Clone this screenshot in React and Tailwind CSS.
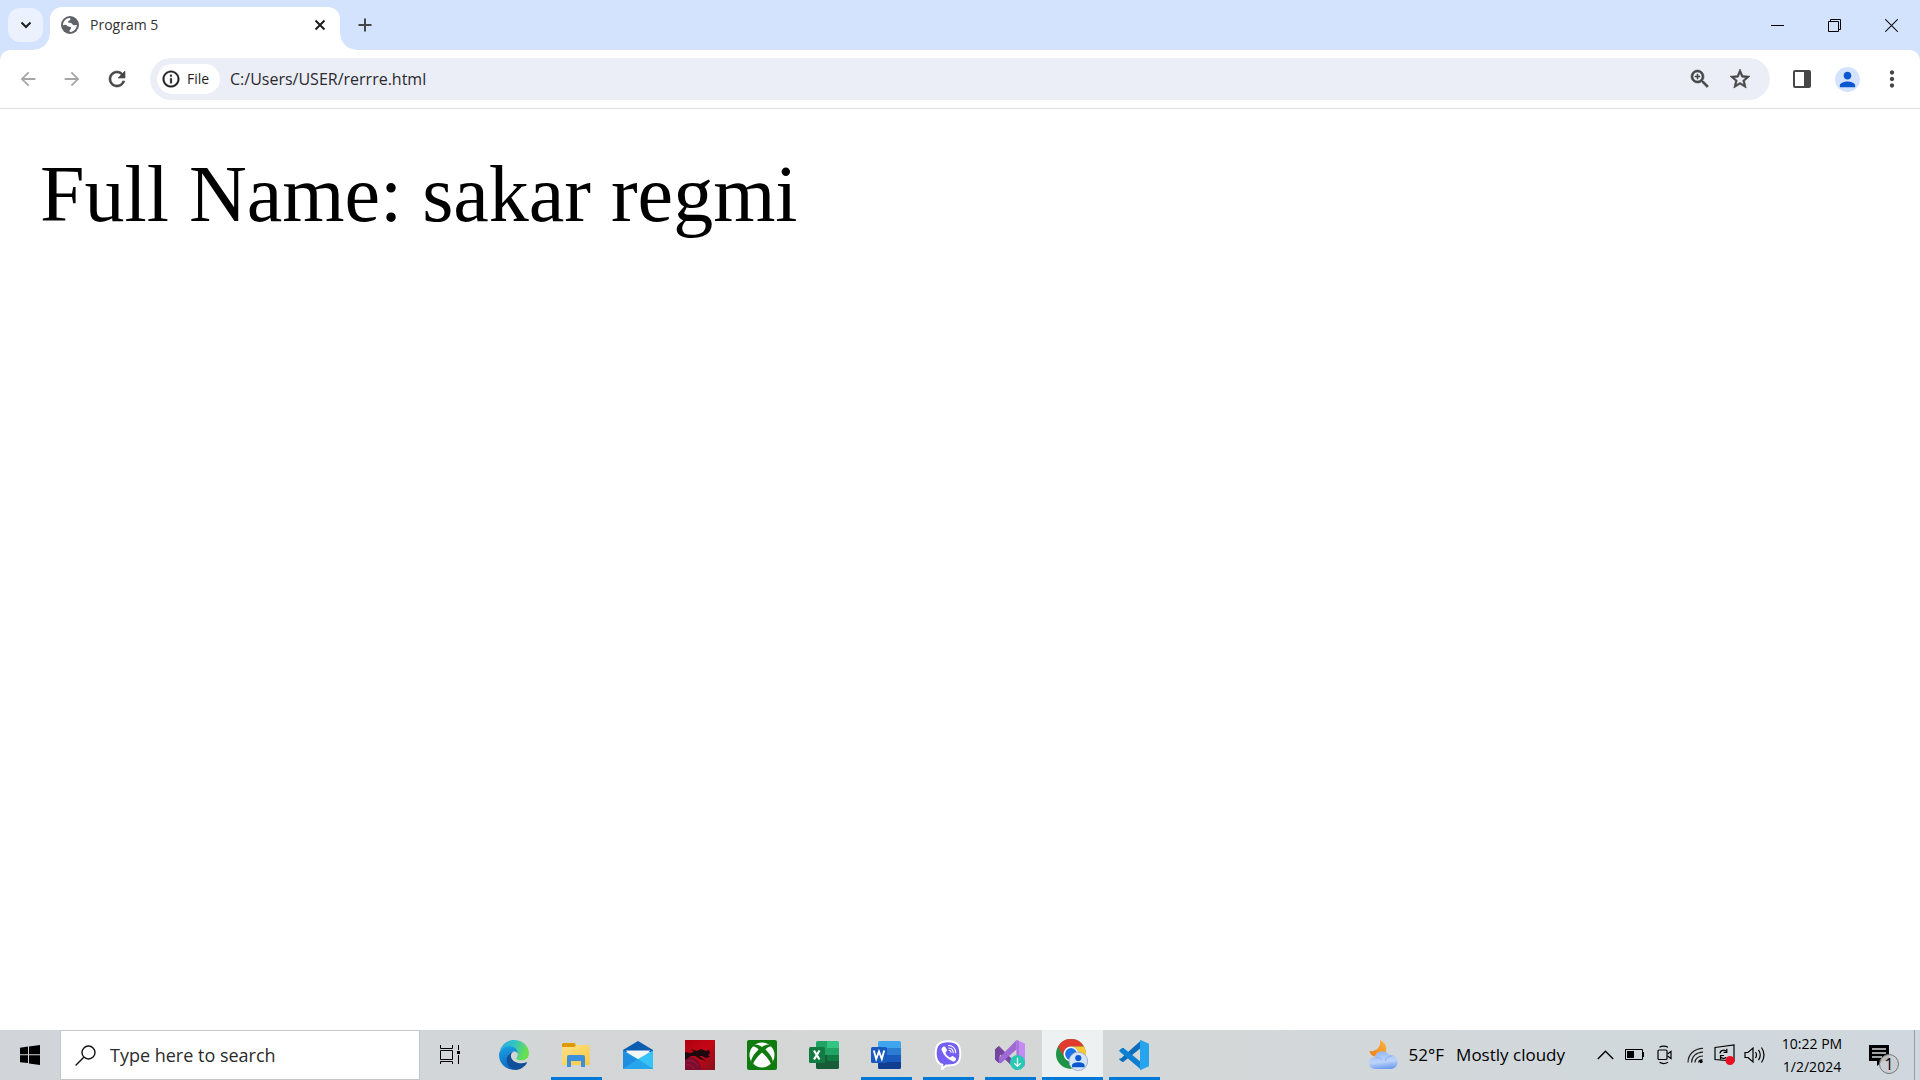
import React from "react";
import {
  MdArrowBack,
  MdArrowForward,
  MdInfoOutline,
  MdMoreVert,
  MdPerson,
  MdRefresh,
  MdStarBorder,
  MdZoomIn,
} from "react-icons/md";

/* ---------- Browser icons ---------- */

function GlobeIcon() {
  return (
    <svg width="18" height="18" viewBox="0 0 18 18" aria-hidden="true">
      <circle cx="9" cy="9" r="9" fill="#5f6368" />
      <path
        d="M2 9.2C2 5.6 4.6 2.6 8.3 2.1c1.2 0 1.5 1 .8 1.9-.8.9-2.3.8-2.1 2.1.2 1 1.700.6 2.900.9 1.500.4 1.500 2 2.800 2.200 1 .1 1.800-.5 3.200-.2-.2 3.600-3 6.500-6.500 6.900-1-.2-1.200-1-.6-1.900.5-.8 1.500-1.200 1.200-2.200-.3-1.200-2-.8-3.100-1.500C5.700 9.500 5.500 8.900 4.400 8.800 3.400 8.700 2.600 9.400 2 9.200z"
        fill="#fff"
      />
    </svg>
  );
}

function TabListIcon() {
  return (
    <svg width="12" height="8" viewBox="0 0 12 8" fill="none" stroke="#1f1f1f" strokeWidth="2" aria-hidden="true">
      <path d="M1.500 1.500 6 6l4.500-4.500" />
    </svg>
  );
}

function TabCloseIcon() {
  return (
    <svg width="12" height="12" viewBox="0 0 12 12" stroke="#1f1f1f" strokeWidth="2" aria-hidden="true">
      <path d="m1.500 1.500 9 9m0-9-9 9" />
    </svg>
  );
}

function PlusIcon() {
  return (
    <svg width="14" height="14" viewBox="0 0 14 14" stroke="#444746" strokeWidth="2" aria-hidden="true">
      <path d="M7 .5v13M.5 7h13" />
    </svg>
  );
}

function SidePanelIcon() {
  return (
    <svg width="18" height="18" viewBox="0 0 18 18" aria-hidden="true">
      <rect x="1" y="1" width="16" height="16" rx="1" fill="none" stroke="#474747" strokeWidth="2" />
      <path d="M11 1h6v16h-6z" fill="#474747" />
    </svg>
  );
}

function MinimizeIcon() {
  return (
    <svg width="13" height="13" viewBox="0 0 13 13" aria-hidden="true">
      <path d="M0 6h13v1H0z" />
    </svg>
  );
}

function RestoreIcon() {
  return (
    <svg width="13" height="13" viewBox="0 0 13 13" fill="none" stroke="#000" aria-hidden="true">
      <path d="M.5 2.500h10v10h-10zM2.500 2.500v-2h10v10h-2" />
    </svg>
  );
}

function WindowCloseIcon() {
  return (
    <svg width="13" height="13" viewBox="0 0 13 13" stroke="#111" strokeWidth="1.100" aria-hidden="true">
      <path d="m.3.3 12.400 12.400m0-12.400L.3 12.700" />
    </svg>
  );
}

/* ---------- Taskbar app icons ---------- */

function StartIcon() {
  return (
    <svg width="20" height="20" viewBox="0 0 20 20" aria-hidden="true">
      <path d="M0 2.800 8 1.600v7.700H0zM9 1.500 20 0v9.300H9zM0 10.300h8V18L0 17.200zM9 10.300h11V20L9 18.400z" />
    </svg>
  );
}

function SearchIcon() {
  return (
    <svg width="21" height="21" viewBox="0 0 21 21" fill="none" stroke="#111" strokeWidth="1.400" aria-hidden="true">
      <circle cx="13.500" cy="7.500" r="6.500" />
      <path d="M8.800 12.200.6 20.400" />
    </svg>
  );
}

function TaskViewIcon() {
  return (
    <svg width="21" height="20" viewBox="0 0 21 20" fill="none" stroke="#000" aria-hidden="true">
      <path d="M.5 5.500h12v9H.5zM.5 0v3.500h12V0M.5 19v-2.500h12V19M18.500 0v5M18.500 10v9" />
      <path d="M17 6h3v3h-3z" fill="#000" stroke="none" />
    </svg>
  );
}

function EdgeIcon() {
  return (
    <svg width="30" height="30" viewBox="0 0 24 24" aria-hidden="true">
      <defs>
        <linearGradient id="edgeA" x1="0" y1="0" x2="1" y2="0.300">
          <stop offset="0" stopColor="#2aa7e0" />
          <stop offset="0.500" stopColor="#33c3c4" />
          <stop offset="1" stopColor="#6be04f" />
        </linearGradient>
        <linearGradient id="edgeB" x1="0.300" y1="0" x2="0.500" y2="1">
          <stop offset="0" stopColor="#1aa0e2" />
          <stop offset="1" stopColor="#0a66c2" />
        </linearGradient>
      </defs>
      <path
        d="M.8 8.500C2.300 3.700 6.700 0 12 0c6.500 0 12 4.700 12 10.600 0 3.400-2.600 5.800-6 5.800-2.500 0-4.200-.8-4.200-1.800 0-.6 1.200-1.200 1.200-3.100C15 8.300 12 6 8.600 6 5 6 2 7.100.8 8.500z"
        fill="url(#edgeA)"
      />
      <path
        d="M0 12c0-4.200 4-7.100 8.600-7.100 4.300 0 6.400 3 6.400 5.800-.8-1.100-2-1.600-3.200-1.500C9.200 9.400 6.300 12 6.300 15.500c0 3.800 2.700 7.300 6.700 8.400A12 12 0 0 1 0 12z"
        fill="url(#edgeB)"
      />
      <path
        d="M11.800 9.200C9 10 6 12 6 15.800 6 20 9.500 24 13.500 23.900c3.700-.3 7-2.500 8.800-5.600.2-.4-.1-.7-.5-.5-1.300.6-2.500.8-3.800.8-4.700 0-8.500-2.700-8.500-6.100 0-1.400.9-2.600 2.300-3.300z"
        fill="#104f99"
      />
    </svg>
  );
}

function ExplorerIcon() {
  return (
    <svg width="28" height="26" viewBox="0 0 28 26" aria-hidden="true">
      <defs>
        <linearGradient id="folder" x1="0" y1="0" x2="1" y2="1">
          <stop offset="0" stopColor="#ffe08a" />
          <stop offset="1" stopColor="#fbc93f" />
        </linearGradient>
      </defs>
      <path d="M0 2.500A1.500 1.500 0 0 1 1.500 1h11l1.500 2H27v9H0z" fill="#fdd66b" />
      <path d="M0 2.500A1.500 1.500 0 0 1 1.500 1H12q1.500 0 1.500 2T12 5H0z" fill="#dd9a05" />
      <path d="M0 5h13l2-2h12a.6.6 0 0 1 .6.600V23H0z" fill="url(#folder)" />
      <path d="M5 25V15a2 2 0 0 1 2-2h14a2 2 0 0 1 2 2v10h-4v-6H9v6z" fill="#3b8fdc" />
    </svg>
  );
}

function MailIcon() {
  return (
    <svg width="30" height="28" viewBox="0 0 30 28" aria-hidden="true">
      <path d="M0 9 15 0l15 9v2H0z" fill="#0a5db0" />
      <path d="M2.500 9.500h25L15 20z" fill="#f4f6f8" />
      <path d="M0 9.500 15 18l15-8.500V28H0z" fill="#37c3f5" />
      <path d="M0 9.500 30 28H0z" fill="#1f8ee0" />
      <path d="M15 18 30 28H0L15 18z" fill="#28a6eb" />
    </svg>
  );
}

function DragonIcon() {
  return (
    <svg width="30" height="30" viewBox="0 0 30 30" aria-hidden="true">
      <defs>
        <linearGradient id="dragonBg" x1="0" y1="0" x2="1" y2="1">
          <stop offset="0" stopColor="#b00012" />
          <stop offset="0.500" stopColor="#c40616" />
          <stop offset="1" stopColor="#86101c" />
        </linearGradient>
      </defs>
      <path d="M0 0h30v30H0z" fill="url(#dragonBg)" />
      <path d="M0 19c5-3 11-2 14 3l3 8H0z" fill="#7c0d2d" />
      <path
        d="M0 12l5 1 4-1-3-3 6 2 4-2 5 2 3-1 1 3-2 2 2 2-4 1-4-2-3 0 7 5-6-2-5-3-4 0-6 4z"
        fill="#1d080d"
      />
      <path d="M2 21c5-1 9 1 11 5M1 25c4-1 6 1 8 4" fill="none" stroke="#b51b45" strokeWidth="0.800" />
    </svg>
  );
}

function XboxIcon() {
  return (
    <svg width="30" height="30" viewBox="0 0 30 30" aria-hidden="true">
      <rect width="30" height="30" rx="2" fill="#107c10" />
      <circle cx="15" cy="15" r="12.500" fill="#fff" />
      <path
        d="M6.300 4.800C9.500 3.800 12.500 5.200 15 7c2.500-1.800 5.500-3.200 8.700-2.200l1.300 2c-2.500-1-4.700.6-6.500 2.700 4.100 4 8.100 9.400 7.300 13.900l-1.500 1.500C22.800 20.300 19 16 15 12.500 11 16 7.200 20.300 5.700 24.900l-1.500-1.500c-.8-4.500 3.200-9.900 7.300-13.900C9.700 7.400 7.500 5.800 5 6.800z"
        fill="#107c10"
      />
    </svg>
  );
}

function ExcelIcon() {
  return (
    <svg width="30" height="28" viewBox="0 0 30 28" aria-hidden="true">
      <path d="M7 1.500A1.500 1.500 0 0 1 8.500 0H18v14H7z" fill="#21a366" />
      <path d="M18 0h10.500A1.500 1.500 0 0 1 30 1.500V7H18z" fill="#33c481" />
      <path d="M18 7h12v7H18z" fill="#21a366" />
      <path d="M7 14h11v7H7z" fill="#185c37" />
      <path d="M18 14h12v7H18z" fill="#107c41" />
      <path d="M7 20h23v6.500a1.500 1.500 0 0 1-1.500 1.500h-20A1.500 1.500 0 0 1 7 26.500z" fill="#185c37" />
      <rect y="6" width="16" height="16" rx="1.500" fill="#107c41" />
      <path d="m5 9.500 5.500 9m0-9-5.500 9" stroke="#fff" strokeWidth="2.200" />
    </svg>
  );
}

function WordIcon() {
  return (
    <svg width="30" height="28" viewBox="0 0 30 28" aria-hidden="true">
      <path d="M7 1.500A1.500 1.500 0 0 1 8.500 0h20A1.500 1.500 0 0 1 30 1.500V7H7z" fill="#41a5ee" />
      <path d="M7 7h23v7H7z" fill="#2b7cd3" />
      <path d="M7 14h23v7H7z" fill="#185abd" />
      <path d="M7 21h23v5.500a1.500 1.500 0 0 1-1.500 1.500h-20A1.500 1.500 0 0 1 7 26.500z" fill="#103f91" />
      <rect y="6" width="16" height="16" rx="1.500" fill="#185abd" />
      <path d="m2.800 9.500 2.400 8.500L8 10.500l2.800 7.500 2.400-8.500" fill="none" stroke="#fff" strokeWidth="1.900" />
    </svg>
  );
}

function ViberIcon() {
  return (
    <svg width="30" height="30" viewBox="0 0 30 30" aria-hidden="true">
      <path
        d="M15 1.200c8.500 0 12.300 3.300 12.300 12.500S23.500 25.600 15 25.600l-2-.1L9.300 29v-4.300C4.500 23.300 2.700 20 2.700 13.700 2.700 4.500 6.500 1.200 15 1.200z"
        fill="#7360f2"
        stroke="#fff"
        strokeWidth="2"
      />
      <path
        d="M10.300 6.700c.9-.6 1.600-.1 2.300.9l1.200 1.900c.4.800.2 1.500-.5 2-.8.600-.9 1-.5 2 .8 1.900 2 3 3.700 3.700.8.300 1.200.1 1.700-.5.600-.7 1.300-.8 2-.4l2 1.400c.9.700 1.100 1.400.6 2.200-.9 1.300-1.900 1.900-3.200 1.400-5.300-2.200-9.100-6-11-11.200-.4-1.300.3-2.500 1.700-3.400z"
        fill="#fff"
      />
      <path
        d="M15.500 5.500c4.300.2 7 2.900 7.200 7.300M15.800 8c2.800.2 4.300 1.800 4.500 4.600M16.200 10.300c1.200.1 1.800.8 1.900 2"
        fill="none"
        stroke="#fff"
        strokeWidth="1.100"
        strokeLinecap="round"
      />
    </svg>
  );
}

function VisualStudioIcon() {
  return (
    <svg width="30" height="30" viewBox="0 0 30 30" aria-hidden="true">
      <path d="M0 9.500 4 6v17l-4-3.500z" fill="#5b2f94" />
      <path d="M0 9.500 4 6l18 18v6h-1L5 14.500 4 23l-4-3.500z" fill="#75459f" />
      <path d="M21.500 0 4 18v5l2 .2L22 9z" fill="#9e6ad6" />
      <path d="M21.500 0 30 3.500V26l-8 4z" fill="#c48bf2" />
      <path d="M21.500 0 24 1v28l-2.500 1z" fill="#a974df" />
      <circle cx="22.500" cy="22.500" r="7.500" fill="#25c9b4" />
      <path d="M22.500 17.800v8.500m-3.300-3.200 3.300 3.300 3.300-3.300" fill="none" stroke="#fff" strokeWidth="1.300" />
    </svg>
  );
}

function ChromeIcon() {
  return (
    <svg width="32" height="32" viewBox="0 0 32 32" aria-hidden="true">
      <circle cx="15" cy="15" r="15" fill="#1e9447" />
      <path d="M2 7.500A15 15 0 0 1 28 7.500H15a7.500 7.500 0 0 0-6.500 11.200z" fill="#e33b2e" />
      <path d="M28 7.500A15 15 0 0 1 15 30l6.500-11.200A7.500 7.500 0 0 0 15 7.500z" fill="#fcc934" />
      <circle cx="15" cy="15" r="7.500" fill="#fff" />
      <circle cx="15" cy="15" r="5.900" fill="#1a73e8" />
      <circle cx="22.300" cy="22.300" r="9.300" fill="#d3e3fd" stroke="#9aa3b2" strokeWidth="0.800" />
      <circle cx="22.300" cy="19" r="3.100" fill="#0b57d0" />
      <path d="M16 28.200v-1.800c0-2.300 4.200-3.100 6.300-3.100s6.300.8 6.300 3.100v1.800z" fill="#0b57d0" />
    </svg>
  );
}

function VsCodeIcon() {
  return (
    <svg width="30" height="30" viewBox="0 0 30 30" aria-hidden="true">
      <path d="M1.800 18.500 22.500 0v7.500L4.500 21.800c-.5.300-1 .3-1.400 0L.6 19.900c-.5-.4-.5-1 0-1.400z" fill="#0a6ebd" />
      <path d="M.6 11.500c-.5-.4-.5-1 0-1.400l2.500-2c.4-.3.900-.3 1.400 0l18 14.400V30z" fill="#0b7fd0" />
      <path d="M22 .2 29 3.300c.6.300 1 .8 1 1.500v20.400c0 .7-.4 1.200-1 1.500l-7 3.100c-.7.300-1 .1-1-.5V.8c0-.6.300-.9 1-.6z" fill="#27a4ee" />
    </svg>
  );
}

/* ---------- System tray icons ---------- */

function WeatherIcon() {
  return (
    <svg width="30" height="30" viewBox="0 0 30 30" aria-hidden="true">
      <defs>
        <linearGradient id="moon" x1="0" y1="1" x2="1" y2="0">
          <stop offset="0" stopColor="#f07d1a" />
          <stop offset="1" stopColor="#fbb53a" />
        </linearGradient>
        <linearGradient id="cloud" x1="0.300" y1="0" x2="0.500" y2="1">
          <stop offset="0" stopColor="#94b8f5" />
          <stop offset="0.600" stopColor="#bdd3fa" />
          <stop offset="1" stopColor="#6f9cf0" />
        </linearGradient>
      </defs>
      <path d="M11 0c5 2.500 7.200 7 6 12l-10 5C4 16.500 1 14.500.3 11 6.500 12 12.500 7.500 11 0z" fill="url(#moon)" />
      <path d="M6 29a6 6 0 0 1-.3-12A8 8 0 0 1 20 14.800 7.200 7.200 0 1 1 22.800 29z" fill="url(#cloud)" />
      <path d="M6.500 17.500c3.500-.3 5.500 1 6.500 3M16 21c1-3.500 3.500-5 7-5" fill="none" stroke="#7ea7f2" strokeWidth="0.800" />
    </svg>
  );
}

function ChevronUpIcon() {
  return (
    <svg width="17" height="10" viewBox="0 0 17 10" fill="none" stroke="#000" strokeWidth="1.400" aria-hidden="true">
      <path d="m.8 9 7.700-7.700L16.200 9" />
    </svg>
  );
}

function BatteryIcon() {
  return (
    <svg width="20" height="12" viewBox="0 0 20 12" aria-hidden="true">
      <path d="M.5.500h17v10H.5z" fill="none" stroke="#000" />
      <path d="M2 2h7v7H2zM18 3h1v5h-1z" />
    </svg>
  );
}

function MeetNowIcon() {
  return (
    <svg width="16" height="20" viewBox="0 0 16 20" fill="none" stroke="#000" strokeWidth="1.200" aria-hidden="true">
      <rect x="1" y="5" width="9" height="9.500" rx="1" />
      <path d="m10.500 9 3.500-2.500v7L10.500 11M2.500 2.300q4-2.500 8.500 0M2.500 17.300q4 2.500 8.500 0" />
    </svg>
  );
}

function WifiIcon() {
  return (
    <svg width="17" height="17" viewBox="0 0 17 17" fill="none" stroke="#222" strokeWidth="1.200" aria-hidden="true">
      <path d="M1 15.500C1 7.500 7 1.500 16 1.300M4.500 15.500C4.800 9.500 9 5.500 16 5.200M8 15.500c.3-3.700 3-6.300 8-6.500" />
      <path d="M11.500 15.500c.2-1.700 1.600-2.900 4-3" />
      <circle cx="14" cy="14.500" r="1.700" fill="#000" stroke="none" />
    </svg>
  );
}

function SyncIcon() {
  return (
    <svg width="22" height="22" viewBox="0 0 22 22" fill="none" stroke="#000" strokeWidth="1.200" aria-hidden="true">
      <path d="M1 3.500 20 1v16l-19-1.500z" />
      <path d="M6 9.500c0-3 4.500-4.500 6.500-2M12.800 4.800v3.500H9.500M6.500 15.500V11.500H10M6.500 12.500c1 2.300 4 2.500 5.500 1" />
      <circle cx="16" cy="16.500" r="4.600" fill="#e81123" stroke="none" />
    </svg>
  );
}

function VolumeIcon() {
  return (
    <svg width="22" height="18" viewBox="0 0 22 18" fill="none" stroke="#000" strokeWidth="1.200" aria-hidden="true">
      <path d="M1 6.500h3l5-4.500v14l-5-4.500H1z" />
      <path d="M11.500 6q2 3 0 6M14.500 3.800q3.500 5.200 0 10.400M17.500 1.500q5 7.500 0 15" />
    </svg>
  );
}

function NotificationIcon() {
  return (
    <svg width="20" height="21" viewBox="0 0 20 21" aria-hidden="true">
      <path d="M0 0h20v16h-6l-6 5v-5H0z" />
      <path d="M3 4h14M3 8h14M3 12h10" stroke="#d2d8dc" strokeWidth="1.400" />
    </svg>
  );
}

/* ---------- Page sections ---------- */

function TabStrip() {
  return (
    <div className="flex h-[50px] items-stretch">
      <button
        aria-label="Search tabs"
        className="my-2 ml-2 flex w-[35px] shrink-0 items-center justify-center rounded-xl bg-[#ebf2fe]"
      >
        <TabListIcon />
      </button>
      <div className="relative mt-[7px] ml-[7px] flex w-[290px] items-center rounded-t-xl bg-white pb-[7px] pl-[11px] before:absolute before:bottom-0 before:-left-4 before:size-4 before:bg-[radial-gradient(circle_at_top_left,transparent_15px,white_16px)] after:absolute after:-right-4 after:bottom-0 after:size-4 after:bg-[radial-gradient(circle_at_top_right,transparent_15px,white_16px)]">
        <GlobeIcon />
        <span className="ml-[11px] grow text-sm text-[#333]">Program 5</span>
        <button aria-label="Close tab" className="mr-3.5 flex items-center">
          <TabCloseIcon />
        </button>
      </div>
      <button aria-label="New tab" className="ml-2 flex w-[34px] items-center justify-center">
        <PlusIcon />
      </button>
      <div className="ml-auto flex">
        <button aria-label="Minimize" className="flex w-[57px] items-center justify-center">
          <MinimizeIcon />
        </button>
        <button aria-label="Restore" className="flex w-[57px] items-center justify-center">
          <RestoreIcon />
        </button>
        <button aria-label="Close window" className="flex w-[57px] items-center justify-center">
          <WindowCloseIcon />
        </button>
      </div>
    </div>
  );
}

/* Thickens an icon's outline while leaving its empty bounding box unpainted. */
const boldIcon = "[&>path[fill=none]]:hidden";

function Toolbar() {
  return (
    <div className="flex h-[59px] items-center rounded-t-[10px] border-b border-[#dfe1e5] bg-white px-1.5">
      <button aria-label="Back" className="flex w-11 justify-center text-[#a6a6a6]">
        <MdArrowBack size={22} />
      </button>
      <button aria-label="Forward" className="flex w-11 justify-center text-[#a6a6a6]">
        <MdArrowForward size={22} />
      </button>
      <button aria-label="Reload" className="flex w-[46px] justify-center text-[#474747]">
        <MdRefresh size={24} strokeWidth={0.6} className={boldIcon} />
      </button>
      <div className="ml-2.5 flex h-[42px] grow items-center rounded-full bg-[#ebedf7] pr-4 pl-[7px]">
        <button className="flex h-[30px] w-[63px] shrink-0 items-center gap-1.5 rounded-full bg-white pl-1 text-sm font-medium text-[#1f1f1f]">
          <MdInfoOutline size={20} strokeWidth={0.4} className={boldIcon} />
          File
        </button>
        <input
          aria-label="Address"
          defaultValue="C:/Users/USER/rerrre.html"
          className="ml-2.5 min-w-0 grow bg-transparent text-base text-[#2a2a2e] outline-none"
        />
        <button aria-label="Zoom" className="flex w-10 justify-center text-[#474747]">
          <MdZoomIn size={24} strokeWidth={0.6} className={boldIcon} />
        </button>
        <button aria-label="Bookmark" className="-mr-1.5 flex w-10 justify-center text-[#474747]">
          <MdStarBorder size={24} strokeWidth={0.6} className={boldIcon} />
        </button>
      </div>
      <button aria-label="Side panel" className="ml-2.5 flex w-11 justify-center">
        <SidePanelIcon />
      </button>
      <button
        aria-label="Profile"
        className="mr-2.5 ml-[11px] flex size-[25px] items-center justify-center rounded-full bg-[#d3e3fd] text-[#0b57d0]"
      >
        <MdPerson size={23} />
      </button>
      <button aria-label="Menu" className="flex w-11 justify-center text-[#474747]">
        <MdMoreVert size={26} />
      </button>
    </div>
  );
}

const apps = [
  { name: "Edge", Icon: EdgeIcon, open: false, active: false },
  { name: "File Explorer", Icon: ExplorerIcon, open: true, active: false },
  { name: "Mail", Icon: MailIcon, open: false, active: false },
  { name: "Dragon Center", Icon: DragonIcon, open: false, active: false },
  { name: "Xbox", Icon: XboxIcon, open: false, active: false },
  { name: "Excel", Icon: ExcelIcon, open: false, active: false },
  { name: "Word", Icon: WordIcon, open: true, active: false },
  { name: "Viber", Icon: ViberIcon, open: true, active: false },
  { name: "Visual Studio Installer", Icon: VisualStudioIcon, open: true, active: false },
  { name: "Chrome", Icon: ChromeIcon, open: true, active: true },
  { name: "Visual Studio Code", Icon: VsCodeIcon, open: true, active: false },
];

const tray = [
  { name: "Show hidden icons", Icon: ChevronUpIcon },
  { name: "Battery", Icon: BatteryIcon },
  { name: "Meet Now", Icon: MeetNowIcon },
  { name: "Network", Icon: WifiIcon },
  { name: "Updates", Icon: SyncIcon },
  { name: "Volume", Icon: VolumeIcon },
];

function AppButton({ name, Icon, open, active }) {
  return (
    <button aria-label={name} className="flex w-[62px] justify-center">
      <span
        className={
          "flex h-full items-center justify-center border-b-3 pt-[3px] " +
          (active ? "w-[61px] bg-[#edf1f2] " : "w-[51px] ") +
          (open ? "border-[#0078d7]" : "border-transparent")
        }
      >
        <Icon />
      </span>
    </button>
  );
}

function Taskbar() {
  return (
    <footer className="flex h-[50px] items-stretch bg-linear-to-r from-[#d1d5d9] via-[#d5d7d6] to-[#cfd8de]">
      <button aria-label="Start" className="flex w-[60px] items-center justify-center">
        <StartIcon />
      </button>
      <label className="flex w-[360px] items-center gap-3.5 border border-[#c4c7c9] bg-white pl-3.5">
        <SearchIcon />
        <input
          aria-label="Search"
          placeholder="Type here to search"
          className="min-w-0 grow text-lg outline-none placeholder:text-[#2b2b2b]"
        />
      </label>
      <button aria-label="Task view" className="flex w-[63px] items-center pl-5">
        <TaskViewIcon />
      </button>
      {apps.map((app) => (
        <AppButton key={app.name} {...app} />
      ))}
      <button className="ml-auto flex items-center pr-[25px] text-[17px] whitespace-nowrap">
        <WeatherIcon />
        <span className="ml-2.5">52°F</span>
        <span className="ml-3">Mostly cloudy</span>
      </button>
      {tray.map(({ name, Icon }) => (
        <button key={name} aria-label={name} className="flex w-[30px] items-center justify-center">
          <Icon />
        </button>
      ))}
      <button className="w-[84px] text-center text-sm leading-[23px]">
        <span className="block">10:22 PM</span>
        <span className="block">1/2/2024</span>
      </button>
      <button aria-label="Notifications" className="flex w-[60px] items-center pl-[15px]">
        <span className="relative">
          <NotificationIcon />
          <span className="absolute top-[9px] left-2.5 flex size-5 items-center justify-center rounded-full border border-[#777] bg-[#c9cdd0]/90 text-base leading-none">
            1
          </span>
        </span>
      </button>
      <button aria-label="Show desktop" className="w-1.5 border-l border-[#9a9fa3]" />
    </footer>
  );
}

export default function App() {
  return (
    <div className="flex min-h-screen flex-col bg-white font-['Open_Sans',sans-serif] text-black">
      <header className="bg-[#d3e3fd]">
        <TabStrip />
        <Toolbar />
      </header>
      <main className="grow p-10 font-['Liberation_Serif',serif] text-[80px] leading-[90px]">
        Full Name: sakar regmi
      </main>
      <Taskbar />
    </div>
  );
}
